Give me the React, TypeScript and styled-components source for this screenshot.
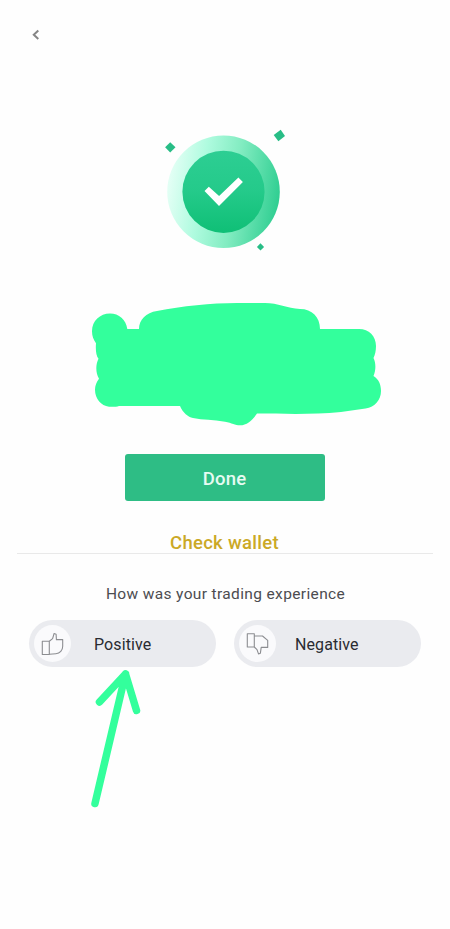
import React from "react";
import styled, { createGlobalStyle } from "styled-components";

const GlobalStyle = createGlobalStyle`
  * { box-sizing: border-box; }
  body { margin: 0; background: #fefefe; }
  button { border: 0; padding: 0; font: inherit; cursor: pointer; }
  svg { display: block; }
`;

const Screen = styled.main`
  position: relative;
  display: flex;
  flex-direction: column;
  align-items: center;
  width: 450px;
  height: 929px;
  overflow: hidden;
  background: #fefefe;
  font-family: Roboto, sans-serif;
`;

const Header = styled.header`
  display: flex;
  width: 100%;
  padding: 29px 0 0 31px;
`;

const BackButton = styled.button`
  width: 10px;
  height: 12px;
  background: none;
`;

const Illustration = styled.svg`
  flex: none;
  width: 150px;
  height: 150px;
  margin: 74px 0 0;
`;

const Redaction = styled.svg`
  flex: none;
  width: 300px;
  height: 130px;
  margin-top: 34px;
`;

const DoneButton = styled.button`
  flex: none;
  width: 200px;
  height: 47px;
  margin: 25px 1px 0 0;
  padding-top: 2px;
  border-radius: 3px;
  background: #2ebd85;
  color: #e6fbf2;
  && {
    font-size: 18.5px;
    font-weight: 500;
    letter-spacing: 0.2px;
  }
`;

const WalletLink = styled.a`
  margin: 31px 1px 0 0;
  height: 21px;
  color: #cba926;
  font-size: 18.5px;
  font-weight: 500;
  line-height: 22px;
  letter-spacing: 0.3px;
  white-space: nowrap;
`;

const Divider = styled.hr`
  flex: none;
  width: 416px;
  height: 1px;
  margin: 0 0 0 -1px;
  border: 0;
  background: #e9e9e9;
`;

const Question = styled.p`
  margin: 30px 0 0 1px;
  color: #4c4c50;
  font-size: 15.5px;
  line-height: 20px;
  letter-spacing: 0.36px;
  white-space: nowrap;
`;

const Feedback = styled.div`
  display: flex;
  gap: 18px;
  margin-top: 16px;
`;

const Choice = styled.button<{ $gap: number }>`
  display: flex;
  align-items: center;
  gap: ${({ $gap }) => $gap}px;
  width: 187px;
  height: 47px;
  padding: 0 0 0 5px;
  border-radius: 24px;
  background: #eaebef;
  color: #292b31;
  && {
    font-size: 16px;
    letter-spacing: 0.1px;
  }
`;

const ChoiceLabel = styled.span`
  padding-top: 2px;
`;

const Badge = styled.span`
  display: flex;
  align-items: center;
  justify-content: center;
  width: 37px;
  height: 37px;
  padding-right: 2px;
  border-radius: 50%;
  background: #fafafc;
`;

const Arrow = styled.svg`
  position: absolute;
  left: 80px;
  top: 660px;
  width: 70px;
  height: 155px;
`;

const SuccessArt = () => (
  <Illustration viewBox="150 115 150 150" aria-hidden="true">
    <defs>
      <linearGradient id="ring" x1="0" y1="0.4" x2="1" y2="0.55">
        <stop offset="0" stopColor="#e6fff6" />
        <stop offset="0.3" stopColor="#affbdf" />
        <stop offset="0.6" stopColor="#82ecc1" />
        <stop offset="1" stopColor="#2fce91" />
      </linearGradient>
      <linearGradient id="disc" x1="0" y1="0" x2="0" y2="1">
        <stop offset="0" stopColor="#2dce93" />
        <stop offset="0.5" stopColor="#24ca8a" />
        <stop offset="1" stopColor="#0fbf76" />
      </linearGradient>
    </defs>
    <circle cx="223.5" cy="191.7" r="56.3" fill="url(#ring)" />
    <circle cx="223.5" cy="191.8" r="41.1" fill="url(#disc)" />
    <path d="M204.5 191l4.3-4.3 10.3 9.2 19.3-18.4 4.5 4.5L219 206z" fill="#fff" />
    <g fill="#28bd86">
      <path d="M170.2 142.2l5.3 5.1-5.3 5.2-5.1-5.2z" />
      <path d="M280.7 129.7l4.3 6.2-6.6 5.4-4.7-6.2z" />
      <path d="M260.5 243.3l3.6 3.7-3.6 3.6-3.6-3.6z" />
    </g>
  </Illustration>
);

const ThumbUp = () => (
  <svg width="24" height="24" viewBox="40 632 24 24" fill="none" stroke="#8c8d91" strokeWidth="1.1" strokeLinejoin="round">
    <path d="M42.3 641.2h7v13.3h-7zM49.3 641.2l3.3-2.6 1.5-5.1 2 .7.3 5.4h6.3v6.7c0 4-2.8 7.3-6.8 7.5l-6.6.5" />
  </svg>
);

const ThumbDown = () => (
  <svg width="24" height="24" viewBox="245 632 24 24" fill="none" stroke="#8c8d91" strokeWidth="1.1" strokeLinejoin="round">
    <path d="M247.3 633.7h7v13.3h-7zM254.3 636h8.2l5.2 4.3v7.1h-6.5l-.8 5.8-1.9.7-1.5-4.3-2.7-2.6" />
  </svg>
);

export default function App() {
  return (
    <>
      <GlobalStyle />
      <Screen>
        <Header>
          <BackButton aria-label="Back">
            <svg width="10" height="12" fill="none" stroke="#858585" strokeWidth="2">
              <path d="M7.3 1.5L2.8 5.7l4.5 4.2" />
            </svg>
          </BackButton>
        </Header>
        <SuccessArt />
        <Redaction viewBox="75 299 300 130" overflow="visible" aria-hidden="true">
          <path
            fill="#33ff9c"
            d="M92 331C92 321 100 313.5 110 313.5c9 0 16 6 17.3 15.5H139c0-9 7-16.5 18-18C182 306 211 303 237 303h28c13 0 22 5 35 6 12 0 20 8 20 20h39c10 0 17 7 17 17 0 5-1 9-2.5 12 2.5 5 2.5 12 0 18 5 3 7.5 8 7.5 15 0 9-6 16-15.5 17.5L341 412c-30 3-59 1.6-84 1.6-5 7-10 11.7-17 11.7-5 0-8-2.3-15-3.6-12-2-22-1.7-32-3.7-5-1-10-5-13-12h-61c-3 1-7 1-10 .7-8-1-14-8-14-17 0-4 1.5-8 4-11-3.5-6-3.5-14-.5-20-2.5-3-3-9-2.5-15.5-2.5-4-4-7-4-12z"
          />
        </Redaction>
        <DoneButton>Done</DoneButton>
        <WalletLink>Check wallet</WalletLink>
        <Divider />
        <Question>How was your trading experience</Question>
        <Feedback>
          <Choice $gap={23}>
            <Badge><ThumbUp /></Badge>
            <ChoiceLabel>Positive</ChoiceLabel>
          </Choice>
          <Choice $gap={19}>
            <Badge><ThumbDown /></Badge>
            <ChoiceLabel>Negative</ChoiceLabel>
          </Choice>
        </Feedback>
        <Arrow viewBox="80 660 70 155" fill="none" stroke="#33ff9c" strokeWidth="7.5" strokeLinecap="round" strokeLinejoin="round" aria-hidden="true">
          <path d="M95 803.5L125.5 674M99.5 702L125.5 674L136.5 710.5" />
        </Arrow>
      </Screen>
    </>
  );
}
